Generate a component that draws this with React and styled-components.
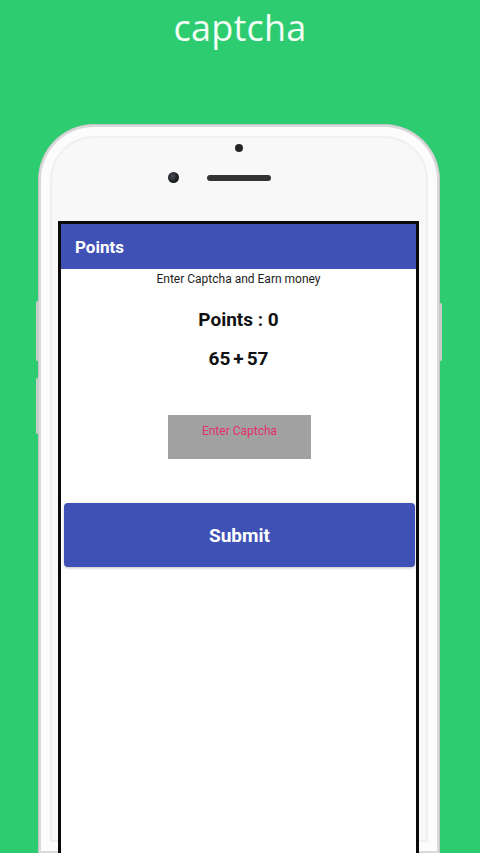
import React from "react";
import styled, { createGlobalStyle } from "styled-components";

const GlobalStyle = createGlobalStyle`
  html, body {
    margin: 0;
    padding: 0;
    background: #2ecc71;
  }
  * {
    box-sizing: border-box;
  }
`;

const Page = styled.div`
  width: 480px;
  height: 853px;
  overflow: hidden;
  background: #2ecc71;
  display: flex;
  flex-direction: column;
  align-items: center;
`;

const Title = styled.h1`
  margin: 10px 0 0;
  font-family: "Open Sans", sans-serif;
  font-weight: 400;
  font-size: 36px;
  line-height: 36px;
  color: #f3fff7;
  letter-spacing: 0.2px;
`;

const Phone = styled.div`
  position: relative;
  margin: 78px 0 0 -2px;
  width: 402px;
  flex: 1;
  border-radius: 56px 56px 0 0;
  background: #f8f8f8;
  border: 1px solid #c4c4c4;
  border-bottom: none;
  box-shadow: inset 0 0 0 2px #d9d9d9, inset 0 0 0 11px #fcfcfc,
    inset 0 0 0 13px #f0f0f0;
  display: flex;
  flex-direction: column;
  padding: 0 20px 0 19px;
`;

const SideKey = styled.span`
  position: absolute;
  top: ${(p) => p.top}px;
  ${(p) => (p.right ? "right: -3px;" : "left: -3px;")}
  width: 3px;
  height: ${(p) => p.len}px;
  border-radius: 2px;
  background: #c9cdca;
`;

const Head = styled.div`
  height: 96px;
  padding-top: 19px;
  display: flex;
  flex-direction: column;
  align-items: center;
`;

const Sensor = styled.span`
  width: 8px;
  height: 8px;
  border-radius: 50%;
  background: #262626;
`;

const EarRow = styled.div`
  margin-top: 20px;
  width: 100%;
  display: grid;
  grid-template-columns: 1fr auto 1fr;
  align-items: center;
`;

const Lens = styled.span`
  justify-self: end;
  margin-right: 28px;
  width: 11px;
  height: 11px;
  border-radius: 50%;
  background: radial-gradient(circle at 40% 40%, #4a4f5a 0, #1c1c1c 60%);
`;

const Speaker = styled.span`
  width: 64px;
  height: 6px;
  border-radius: 3px;
  background: #333;
`;

const Screen = styled.div`
  flex: 1;
  border: 3px solid #0a0a0a;
  border-bottom: none;
  background: #fff;
  display: flex;
  flex-direction: column;
  align-items: center;
  font-family: Roboto, "Liberation Sans", sans-serif;
`;

const AppBar = styled.div`
  align-self: stretch;
  height: 45px;
  background: #3f51b5;
  color: #fff;
  font-size: 17px;
  font-weight: 700;
  display: flex;
  align-items: center;
  padding-left: 14px;
`;

const Hint = styled.div`
  margin-top: 2px;
  font-size: 12px;
  line-height: 16px;
  color: #1e1e1e;
`;

const Big = styled.div`
  margin-top: ${(p) => p.gap}px;
  font-size: 19px;
  font-weight: 700;
  line-height: 22px;
  color: #111;
  display: flex;
  gap: 3px;
`;

const CaptchaField = styled.div`
  margin: 45px 0 0 2px;
  width: 143px;
  height: 44px;
  background: #a1a1a1;
  color: #e2306c;
  font-size: 12px;
  text-align: center;
  padding-top: 9px;
`;

const SubmitButton = styled.button`
  margin-top: 44px;
  align-self: stretch;
  margin-left: 3px;
  margin-right: 1px;
  height: 64px;
  border: none;
  border-radius: 4px;
  background: #3f51b5;
  color: #fff;
  font-family: Roboto, "Liberation Sans", sans-serif;
  font-size: 19px;
  font-weight: 700;
  box-shadow: 0 1px 3px rgba(0, 0, 0, 0.25);
`;

export default function App() {
  return (
    <>
      <GlobalStyle />
      <Page>
        <Title>captcha</Title>
        <Phone>
          <SideKey top={176} len={60} />
          <SideKey top={253} len={56} />
          <SideKey right top={178} len={58} />
          <Head>
            <Sensor />
            <EarRow>
              <Lens />
              <Speaker />
              <span />
            </EarRow>
          </Head>
          <Screen>
            <AppBar>Points</AppBar>
            <Hint>Enter Captcha and Earn money</Hint>
            <Big gap={22}>Points : 0</Big>
            <Big gap={17}>
              <span>65</span>
              <span>+</span>
              <span>57</span>
            </Big>
            <CaptchaField>Enter Captcha</CaptchaField>
            <SubmitButton>Submit</SubmitButton>
          </Screen>
        </Phone>
      </Page>
    </>
  );
}
